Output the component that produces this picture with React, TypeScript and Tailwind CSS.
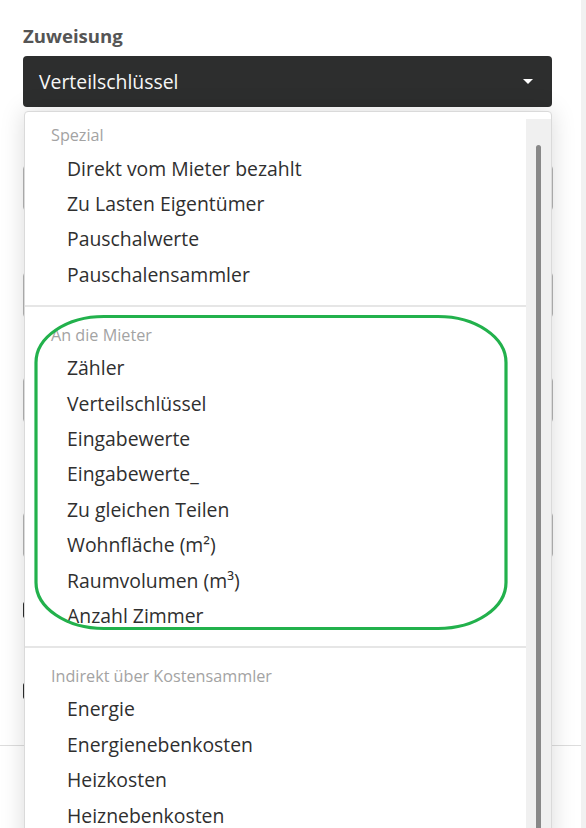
import React from "react";

type Group = { title: string; items: string[] };

const groups: Group[] = [
  {
    title: "Spezial",
    items: [
      "Direkt vom Mieter bezahlt",
      "Zu Lasten Eigentümer",
      "Pauschalwerte",
      "Pauschalensammler",
    ],
  },
  {
    title: "An die Mieter",
    items: [
      "Zähler",
      "Verteilschlüssel",
      "Eingabewerte",
      "Eingabewerte_",
      "Zu gleichen Teilen",
      "Wohnfläche (m²)",
      "Raumvolumen (m³)",
      "Anzahl Zimmer",
    ],
  },
  {
    title: "Indirekt über Kostensammler",
    items: ["Energie", "Energienebenkosten", "Heizkosten", "Heiznebenkosten"],
  },
];

function GhostInput({ className }: { className: string }) {
  return (
    <div
      className={`h-[46px] w-[530px] rounded-[4px] border border-[#b5b5b5] bg-white ${className}`}
    />
  );
}

export default function App() {
  return (
    <div className="relative flex h-[828px] w-[586px] overflow-hidden bg-white font-['Open_Sans',sans-serif]">
      <div className="relative w-[581px]">
        <div className="px-[23px] pt-[24px]">
          <h3 className="text-[18.6px] font-bold leading-[24px] text-[#555555]">
            Zuweisung
          </h3>
          <div className="mt-[8px] flex h-[51px] w-[529px] items-center justify-between rounded-[4px] bg-[#2d2e2e] pl-[16px] pr-[19px]">
            <span className="text-[19.4px] leading-[24px] text-[#f7f7f7]">
              Verteilschlüssel
            </span>
            <span className="h-0 w-0 border-x-[5px] border-t-[5px] border-x-transparent border-t-white" />
          </div>

          {/* form fields hidden behind the open menu */}
          <GhostInput className="mt-[58px]" />
          <GhostInput className="mt-[61px]" />
          <GhostInput className="mt-[59px]" />
          <GhostInput className="mt-[89px]" />
          <div className="mt-[44px] h-[16px] w-[16px] rounded-[2px] bg-[#2d2e2e]" />
          <div className="mt-[65px] h-[16px] w-[16px] rounded-[2px] bg-[#2d2e2e]" />
        </div>
        <div className="mt-[46px] h-px w-full bg-[#dddddd]" />

        {/* open dropdown */}
        <div className="absolute left-[24px] top-[111px] flex h-[740px] w-[528px] rounded-t-[4px] border border-[#dadada] bg-white shadow-[0_0_24px_rgba(0,0,0,0.15)]">
          <ul className="flex-1 pt-[7px]">
            {groups.map((g, gi) => (
              <li key={g.title}>
                {gi > 0 && <div className="h-[2px] bg-[#e6e6e6]" />}
                <div className={gi > 0 ? "pt-[12px] pb-[12px]" : "pb-[12px]"}>
                  <div className="flex h-[32px] items-center pl-[26px] text-[16.2px] leading-[22px] text-[#a3a3a3]">
                    {g.title}
                  </div>
                  {g.items.map((item) => (
                    <div
                      key={item}
                      className="flex h-[35.4px] items-center pl-[42px] text-[19.4px] leading-[24px] text-[#2f2f2f]"
                    >
                      {item}
                    </div>
                  ))}
                </div>
              </li>
            ))}
          </ul>
          <div className="mt-[7px] w-[25px] shrink-0 bg-[#f0f0f0]">
            <div className="ml-[10px] mt-[26px] h-full w-[5px] rounded-t-full bg-[#888888]" />
          </div>
        </div>

        {/* hand drawn highlight */}
        <svg
          className="pointer-events-none absolute left-0 top-0"
          width="581"
          height="828"
          viewBox="0 0 581 828"
        >
          <rect
            x="36"
            y="316.5"
            width="470"
            height="312"
            rx="68"
            ry="46"
            fill="none"
            stroke="#22b14c"
            strokeWidth="3.2"
          />
        </svg>
      </div>
      <div className="w-[5px] bg-[#f1f1f1]" />
    </div>
  );
}
